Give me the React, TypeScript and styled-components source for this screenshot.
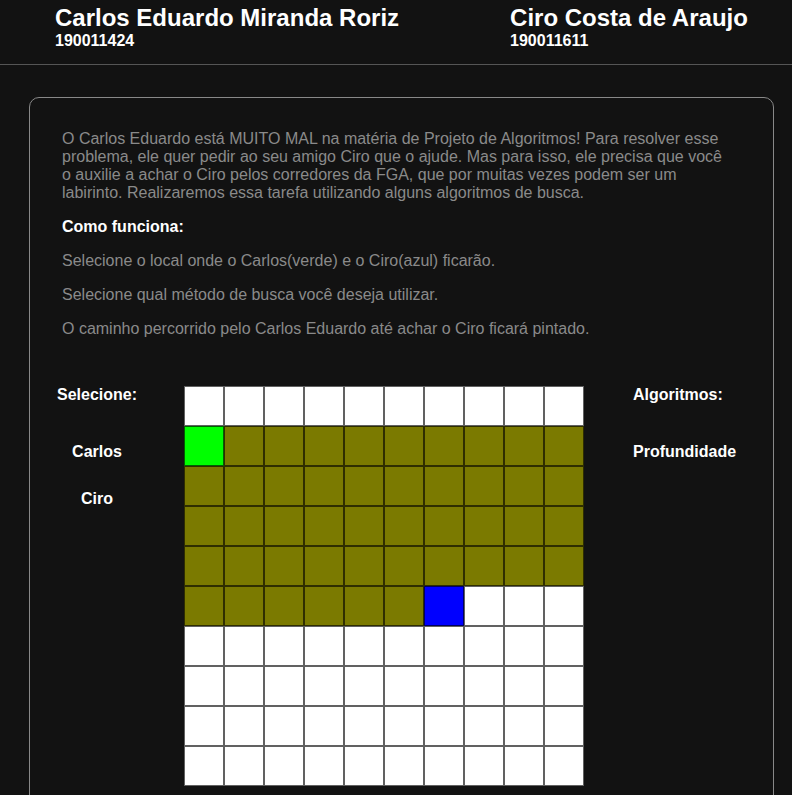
import React from 'react';
import styled, { createGlobalStyle } from 'styled-components';

const GlobalStyle = createGlobalStyle`
  body {
    margin: 0;
    background-color: #121212;
    font-family: "Liberation Sans", Arial, sans-serif;
    color: #ffffff;
  }
`;

const Header = styled.header`
  display: flex;
  gap: 111px;
  padding: 4px 0 0 55px;
  height: 60px;
  border-bottom: 1px solid #555555;
`;

const Person = styled.div`
  display: flex;
  flex-direction: column;
`;

const Name = styled.h1`
  margin: 0;
  font-size: 24px;
  font-weight: bold;
`;

const Registration = styled.span`
  font-size: 16px;
  font-weight: bold;
`;

const Card = styled.main`
  display: flex;
  flex-direction: column;
  margin: 32px 18px 0 29px;
  border: 1px solid #888888;
  border-radius: 10px;
  padding-bottom: 40px;
`;

const Intro = styled.section`
  display: flex;
  flex-direction: column;
  padding: 32px 45px 0 32px;
`;

const Text = styled.p<{ $strong?: boolean }>`
  margin: 0 0 16px;
  font-size: 16px;
  line-height: 18px;
  color: ${(p) => (p.$strong ? '#ffffff' : '#8a8a8a')};
  font-weight: ${(p) => (p.$strong ? 'bold' : 'normal')};
`;

const Play = styled.section`
  display: flex;
  align-items: flex-start;
  margin-top: 32px;
`;

const Side = styled.div<{ $width: number; $center?: boolean }>`
  display: flex;
  flex-direction: column;
  align-items: ${(p) => (p.$center ? 'center' : 'flex-start')};
  width: ${(p) => p.$width}px;
  gap: 9px;
`;

const Label = styled.span`
  font-size: 16px;
  font-weight: bold;
  line-height: 18px;
  margin-bottom: 20px;
`;

const Option = styled.button`
  height: 38px;
  padding: 0;
  border: none;
  background: none;
  color: #ffffff;
  font-family: "Liberation Sans", Arial, sans-serif;
  font-size: 16px;
  font-weight: bold;
`;

const Board = styled.div`
  display: grid;
  grid-template-columns: repeat(10, 40px);
  grid-auto-rows: 40px;
  margin: 0 49px 0 20px;
`;

type CellKind = 'free' | 'path' | 'start' | 'goal';

const cellColors: Record<CellKind, string> = {
  free: '#ffffff',
  path: '#7b7a00',
  start: '#00ff00',
  goal: '#0000ff',
};

const Cell = styled.div<{ $kind: CellKind }>`
  box-sizing: border-box;
  border: 1px solid rgba(0, 0, 0, 0.62);
  background-color: ${(p) => cellColors[p.$kind]};
`;

const cellKind = (row: number, col: number): CellKind => {
  if (row === 1 && col === 0) return 'start';
  if (row === 5 && col === 6) return 'goal';
  if (row >= 1 && row <= 4) return 'path';
  if (row === 5 && col < 6) return 'path';
  return 'free';
};

export default function App() {
  const cells = [];
  for (let r = 0; r < 10; r++) {
    for (let c = 0; c < 10; c++) {
      cells.push(<Cell key={`${r}-${c}`} $kind={cellKind(r, c)} />);
    }
  }

  return (
    <>
      <GlobalStyle />
      <Header>
        <Person>
          <Name>Carlos Eduardo Miranda Roriz</Name>
          <Registration>190011424</Registration>
        </Person>
        <Person>
          <Name>Ciro Costa de Araujo</Name>
          <Registration>190011611</Registration>
        </Person>
      </Header>
      <Card>
        <Intro>
          <Text>
            O Carlos Eduardo está MUITO MAL na matéria de Projeto de Algoritmos! Para resolver esse
            problema, ele quer pedir ao seu amigo Ciro que o ajude. Mas para isso, ele precisa que você
            o auxilie a achar o Ciro pelos corredores da FGA, que por muitas vezes podem ser um
            labirinto. Realizaremos essa tarefa utilizando alguns algoritmos de busca.
          </Text>
          <Text $strong>Como funciona:</Text>
          <Text>Selecione o local onde o Carlos(verde) e o Ciro(azul) ficarão.</Text>
          <Text>Selecione qual método de busca você deseja utilizar.</Text>
          <Text>O caminho percorrido pelo Carlos Eduardo até achar o Ciro ficará pintado.</Text>
        </Intro>
        <Play>
          <Side $width={134} $center>
            <Label>Selecione:</Label>
            <Option>Carlos</Option>
            <Option>Ciro</Option>
          </Side>
          <Board>{cells}</Board>
          <Side $width={120}>
            <Label>Algoritmos:</Label>
            <Option>Profundidade</Option>
          </Side>
        </Play>
      </Card>
    </>
  );
}
